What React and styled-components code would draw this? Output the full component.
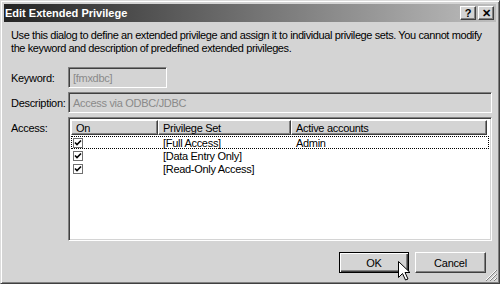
import React from 'react';
import styled, { createGlobalStyle } from 'styled-components';

const GlobalStyle = createGlobalStyle`
  html, body {
    margin: 0;
    padding: 0;
    background: #d4d4d4;
  }
  body {
    font-family: "Liberation Sans", Arial, sans-serif;
    font-size: 11px;
    color: #000;
  }
`;

const Window = styled.div`
  position: relative;
  box-sizing: border-box;
  width: 500px;
  height: 284px;
  background: #d4d4d4;
  border: 1px solid;
  border-color: #dcdcdc #404040 #404040 #dcdcdc;
  box-shadow: inset 1px 1px 0 #fff, inset -1px -1px 0 #808080;
  padding: 3px;
  display: flex;
  flex-direction: column;
`;

const TitleBar = styled.div`
  height: 18px;
  display: flex;
  align-items: center;
  padding: 0 2px 0 1px;
  background: linear-gradient(to right, #242424 0%, #6a6a6a 45%, #bdbdbd 100%);
`;

const Title = styled.div`
  flex: 1;
  color: #fff;
  font-weight: bold;
  font-size: 11px;
`;

const CaptionButton = styled.div`
  box-sizing: border-box;
  width: 16px;
  height: 14px;
  margin-left: ${p => (p.$gap ? '2px' : '0')};
  background: #d4d4d4;
  border: 1px solid;
  border-color: #fff #404040 #404040 #fff;
  box-shadow: inset -1px -1px 0 #808080;
  display: flex;
  align-items: center;
  justify-content: center;
  font-weight: bold;
  font-size: 11px;
  line-height: 1;
  color: #000;
`;

const Body = styled.div`
  flex: 1;
  display: flex;
  flex-direction: column;
  padding: 7px 8px 7px 7px;
  letter-spacing: -0.3px;
`;

const Intro = styled.p`
  margin: 0 0 12px 0;
  line-height: 13px;
  letter-spacing: -0.4px;
  white-space: nowrap;
`;

const Form = styled.div`
  display: grid;
  grid-template-columns: 57px 1fr;
  row-gap: 4px;
  padding-right: 1px;
`;

const Label = styled.div`
  display: flex;
  align-items: ${p => (p.$top ? 'flex-start' : 'center')};
  padding-top: ${p => (p.$top ? '5px' : '0')};
`;

const Field = styled.div`
  box-sizing: border-box;
  height: 21px;
  width: ${p => p.$w || 'auto'};
  background: #d4d4d4;
  border: 1px solid;
  border-color: #808080 #fff #fff #808080;
  box-shadow: inset 1px 1px 0 #404040, inset -1px -1px 0 #d4d4d4;
  color: #8a8a8a;
  display: flex;
  align-items: center;
  padding-left: 4px;
`;

const List = styled.div`
  box-sizing: border-box;
  height: 124px;
  background: #fff;
  border: 1px solid;
  border-color: #808080 #fff #fff #808080;
  box-shadow: inset 1px 1px 0 #404040, inset -1px -1px 0 #d4d4d4;
  padding: 2px;
  display: flex;
  flex-direction: column;
`;

const cols = '87px 133px 196px';

const HeaderRow = styled.div`
  display: grid;
  grid-template-columns: ${cols};
`;

const HeaderCell = styled.div`
  box-sizing: border-box;
  height: 15px;
  background: #d4d4d4;
  border: 1px solid;
  border-color: #fff #404040 #404040 #fff;
  box-shadow: inset -1px -1px 0 #808080;
  padding-left: 4px;
  display: flex;
  align-items: center;
`;

const Row = styled.div`
  box-sizing: border-box;
  height: 13px;
  display: grid;
  grid-template-columns: ${cols};
  align-items: center;
  border: 1px dotted ${p => (p.$focus ? '#000' : 'transparent')};
  margin-top: ${p => (p.$first ? '1px' : '0')};
`;

const Cell = styled.div`
  padding-left: ${p => p.$pad || '4px'};
  white-space: nowrap;
`;

const CheckBox = styled.div`
  box-sizing: border-box;
  width: 10px;
  height: 10px;
  border: 1px solid #707070;
  background: #fff;
  display: flex;
  align-items: center;
  justify-content: center;
`;

const Footer = styled.div`
  margin-top: auto;
  display: flex;
  justify-content: flex-end;
  gap: 6px;
  padding-right: 2px;
`;

const Button = styled.div`
  box-sizing: border-box;
  width: ${p => (p.$default ? '70px' : '71px')};
  height: 21px;
  background: #d4d4d4;
  border: 1px solid;
  border-color: ${p => (p.$default ? '#000' : '#fff #404040 #404040 #fff')};
  box-shadow: ${p =>
    p.$default
      ? 'inset 1px 1px 0 #fff, inset -1px -1px 0 #404040, inset -2px -2px 0 #808080'
      : 'inset -1px -1px 0 #808080'};
  display: flex;
  align-items: center;
  justify-content: center;
  letter-spacing: -0.2px;
`;

const Cursor = styled.svg`
  position: absolute;
  left: 396px;
  top: 259px;
`;

const Grip = styled.svg`
  position: absolute;
  right: 2px;
  bottom: 2px;
`;

const Check = () => (
  <svg width="8" height="8" viewBox="0 0 8 8">
    <polyline points="1,3.5 3,5.5 7,1.5" fill="none" stroke="#000" strokeWidth="1.6" />
  </svg>
);

const rows = [
  { set: '[Full Access]', accounts: 'Admin' },
  { set: '[Data Entry Only]', accounts: '' },
  { set: '[Read-Only Access]', accounts: '' },
];

export default function App() {
  return (
    <>
      <GlobalStyle />
      <Window>
        <TitleBar>
          <Title>Edit Extended Privilege</Title>
          <CaptionButton>?</CaptionButton>
          <CaptionButton $gap>✕</CaptionButton>
        </TitleBar>
        <Body>
          <Intro>
            Use this dialog to define an extended privilege and assign it to individual privilege sets. You cannot modify
            <br />
            the keyword and description of predefined extended privileges.
          </Intro>
          <Form>
            <Label>Keyword:</Label>
            <Field $w="99px">[fmxdbc]</Field>
            <Label>Description:</Label>
            <Field>Access via ODBC/JDBC</Field>
            <Label $top>Access:</Label>
            <List>
              <HeaderRow>
                <HeaderCell>On</HeaderCell>
                <HeaderCell>Privilege Set</HeaderCell>
                <HeaderCell>Active accounts</HeaderCell>
              </HeaderRow>
              {rows.map((r, i) => (
                <Row key={r.set} $focus={i === 0} $first={i === 0}>
                  <Cell $pad="1px">
                    <CheckBox>
                      <Check />
                    </CheckBox>
                  </Cell>
                  <Cell>{r.set}</Cell>
                  <Cell>{r.accounts}</Cell>
                </Row>
              ))}
            </List>
          </Form>
          <Footer>
            <Button $default>OK</Button>
            <Button>Cancel</Button>
          </Footer>
        </Body>
        <Cursor width="14" height="22" viewBox="0 0 14 22">
          <path
            d="M1.5 1.5 L1.5 17.5 L5.5 13.5 L8.5 20 L11 19 L8 12.5 L13 12.5 Z"
            fill="#fff"
            stroke="#000"
            strokeWidth="1"
          />
        </Cursor>
        <Grip width="12" height="12" viewBox="0 0 12 12">
          <path d="M11 1 L1 11 M11 5 L5 11 M11 9 L9 11" stroke="#fff" strokeWidth="1" />
          <path d="M12 1 L1 12 M12 5 L5 12 M12 9 L9 12" stroke="#808080" strokeWidth="1" />
        </Grip>
      </Window>
    </>
  );
}
